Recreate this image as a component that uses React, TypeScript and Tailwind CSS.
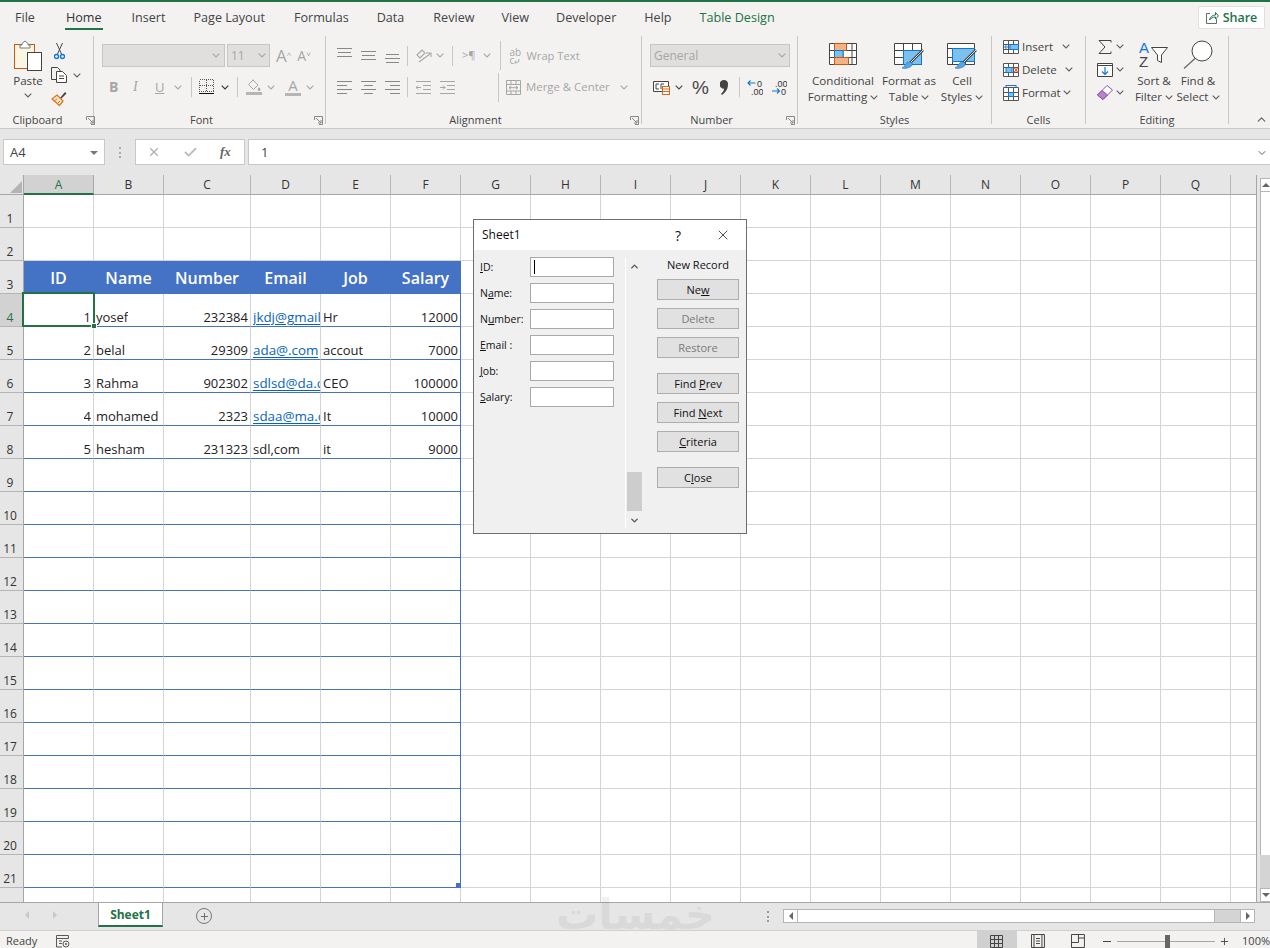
import { ChevronDown, ChevronUp, Check, X, Plus } from 'lucide-react';
import type { ReactNode } from 'react';

const UI = { fontFamily: '"Open Sans", sans-serif' };

const COLS = ['A', 'B', 'C', 'D', 'E', 'F', 'G', 'H', 'I', 'J', 'K', 'L', 'M', 'N', 'O', 'P', 'Q', ''];
const HEAD = ['ID', 'Name', 'Number', 'Email', 'Job', 'Salary'];
const DATA: Record<number, string[]> = {
  4: ['1', 'yosef', '232384', 'jkdj@gmail.com', 'Hr', '12000'],
  5: ['2', 'belal', '29309', 'ada@.com', 'accout', '7000'],
  6: ['3', 'Rahma', '902302', 'sdlsd@da.com', 'CEO', '100000'],
  7: ['4', 'mohamed', '2323', 'sdaa@ma.com', 'It', '10000'],
  8: ['5', 'hesham', '231323', 'sdl,com', 'it', '9000'],
};
const TABS = [
  ['File', 'ml-[15px]'],
  ['Home', 'ml-[31px]'],
  ['Insert', 'ml-[30px]'],
  ['Page Layout', 'ml-[28px]'],
  ['Formulas', 'ml-[29px]'],
  ['Data', 'ml-[28px]'],
  ['Review', 'ml-[29px]'],
  ['View', 'ml-[27px]'],
  ['Developer', 'ml-[27px]'],
  ['Help', 'ml-[28px]'],
  ['Table Design', 'ml-[28px]'],
];

function Chev({ className = 'text-[#605e5c]' }: { className?: string }) {
  return (
    <svg width="8" height="5" viewBox="0 0 8 5" className={className + ' shrink-0'}>
      <path d="M.7.7 4 4l3.3-3.3" fill="none" stroke="currentColor" strokeWidth="1.1" />
    </svg>
  );
}

function Launcher({ className }: { className: string }) {
  return (
    <svg width="9" height="9" viewBox="0 0 9 9" className={'absolute top-[4px] ' + className}>
      <path d="M.5 4V.5H8.5V8.5H5M2 2l5 5M7 4v3H4" fill="none" stroke="#8a8886" strokeWidth="1" />
    </svg>
  );
}

function PasteIcon() {
  return (
    <svg width="30" height="31" viewBox="0 0 30 31">
      <rect x="1.5" y="4.5" width="20" height="24" fill="#fbf5e3" stroke="#c55a11" />
      <path d="M9 5V3.5L12 1l3 2.5V5h2v3H7V5z" fill="#fff" stroke="#7a7a7a" />
      <rect x="14.5" y="12.5" width="14" height="18" fill="#fff" stroke="#444" />
    </svg>
  );
}
function CutIcon() {
  return (
    <svg width="11" height="17" viewBox="0 0 11 17">
      <path d="M2.5 0l5 11M8.500 0l-5 11" stroke="#444" fill="none" />
      <circle cx="2.500" cy="13.500" r="2" fill="none" stroke="#0f78d4" strokeWidth="1.4" />
      <circle cx="8.500" cy="13.500" r="2" fill="none" stroke="#0f78d4" strokeWidth="1.4" />
    </svg>
  );
}
function CopyIcon() {
  return (
    <svg width="17" height="16" viewBox="0 0 17 16">
      <path d="M5 12.500H.5V.5h6L9 3v1" fill="none" stroke="#444" />
      <path d="M5.500 4.500h6l4 4v7h-10zM8 9h5M8 11.500h5" fill="#fff" stroke="#444" />
    </svg>
  );
}
function BrushIcon() {
  return (
    <svg width="16" height="16" viewBox="0 0 16 16">
      <path d="M9 7l5-6 1.500 1.500L10 8z" fill="#444" />
      <path d="M6 4l6 6-3.500 4.500L1 8z" fill="#fbe3c8" stroke="#d87a22" strokeWidth="1.3" />
      <path d="M3 10l3-2M6 13l3-3" stroke="#d87a22" />
    </svg>
  );
}
function BorderIcon() {
  return (
    <svg width="16" height="16" viewBox="0 0 16 16" shapeRendering="crispEdges">
      <path d="M.5.5h14v12H.5zM7.500.5v12M.5 6.500h14" fill="none" stroke="#555" strokeDasharray="1 1" />
      <path d="M0 14.500h15" stroke="#111" />
    </svg>
  );
}
function FillIcon() {
  return (
    <svg width="16" height="16" viewBox="0 0 16 16">
      <path d="M7 1l5 5-4.500 4.500-5-5zM7 1V.5" fill="none" stroke="#a6a6a6" />
      <path d="M13 8c1 1.400 1.500 2 1.500 2.600a1.300 1.300 0 0 1-2.800 0c0-.6.5-1.200 1.300-2.600z" fill="#a6a6a6" />
      <rect y="13" width="16" height="3" fill="#b5b5b5" />
    </svg>
  );
}
function FontColorIcon() {
  return (
    <div className="flex flex-col items-center w-[16px]">
      <span className="text-[15px] leading-[13px] text-[#a6a6a6]">A</span>
      <div className="w-[16px] h-[3px] bg-[#b5b5b5] mt-[1px]" />
    </div>
  );
}
function AlignLines({ d }: { d: string }) {
  return (
    <svg width="15" height="15" viewBox="0 0 15 15">
      <path d={d} stroke="#8a8886" fill="none" />
    </svg>
  );
}
function OrientIcon() {
  return (
    <svg width="17" height="14" viewBox="0 0 17 14">
      <path d="M1 6l5-5 3 3-5 5zM3 13l11-8M10 4h5v4" fill="none" stroke="#a6a6a6" strokeWidth="1.1" />
    </svg>
  );
}
function WrapIcon() {
  return (
    <div className="w-[15px] h-[15px] flex flex-col text-[10px] leading-[8px] text-[#a6a6a6]">
      <span>ab</span>
      <span>c⤶</span>
    </div>
  );
}
function MergeIcon() {
  return (
    <svg width="15" height="15" viewBox="0 0 15 15">
      <path d="M.5.5h14v14H.5zM.5 4.500h14M.5 11h14M5 .5v4M10 .5v4M5 11v3.500M10 11v3.500M3 7.700h9M3 7.700l2-1.600M3 7.700l2 1.600M12 7.700l-2-1.600M12 7.700l-2 1.600" fill="none" stroke="#a6a6a6" />
    </svg>
  );
}
function IndentIcon({ out }: { out?: boolean }) {
  return (
    <svg width="15" height="13" viewBox="0 0 15 13">
      <path d="M0 .5h15M7 4.500h8M7 8.500h8M0 12.500h15" stroke="#a6a6a6" />
      <path d={out ? 'M5 6.500H0M2 4.500l-2 2 2 2' : 'M0 6.500h5M3 4.500l2 2-2 2'} stroke="#a6a6a6" fill="none" />
    </svg>
  );
}
function AccountingIcon() {
  return (
    <svg width="17" height="15" viewBox="0 0 17 15">
      <path d="M.5 1.500h15v10H.5z" fill="#fff" stroke="#444" />
      <path d="M3 4h3M3 4v5h3M8 4h3M8 4v5" fill="none" stroke="#444" />
      <rect x="9.500" y="6.500" width="7" height="8" fill="#fff" stroke="#d46a1a" />
      <path d="M9.500 9h7M9.500 11.500h7" stroke="#d46a1a" />
    </svg>
  );
}
function CommaIcon() {
  return (
    <svg width="8" height="15" viewBox="0 0 8 15">
      <path d="M4 0a4 4 0 0 1 4 4.500c0 4.500-2.500 8-6 10.500l-1-1c2-1.800 3-3.500 3-5.200A4 4 0 0 1 4 0z" fill="#444" />
    </svg>
  );
}
function DecimalIcon({ inc }: { inc?: boolean }) {
  return (
    <svg width="16" height="16" viewBox="0 0 16 16">
      <path
        d={inc ? 'M8.500 4H1M3.500 1.500 1 4l2.500 2.500' : 'M1 12h7.500M6 9.500 8.500 12 6 14.500'}
        fill="none"
        stroke="#0f78d4"
        strokeWidth="1.1"
      />
      <text x={inc ? 10 : 4} y="7.500" fontSize="9" fill="#333" fontFamily="Liberation Sans">
        {inc ? '0' : '.00'}
      </text>
      <text x={inc ? 4 : 10} y="15.500" fontSize="9" fill="#333" fontFamily="Liberation Sans">
        {inc ? '.00' : '0'}
      </text>
    </svg>
  );
}
function CondIcon() {
  return (
    <svg width="28" height="23" viewBox="0 0 28 23">
      <path d="M.5.5h27v21H.5zM.5 7.500h27M.5 14.500h27M5.500.5v21M14 .5v21M23 .5v21" fill="#fff" stroke="#444" />
      <rect x="5.500" y=".5" width="12" height="7" fill="#f4b183" stroke="#c55a11" />
      <rect x="5.500" y="7.500" width="8.500" height="7" fill="#7cc0ee" stroke="#0f78d4" />
      <rect x="5.500" y="14.500" width="14" height="7" fill="#f4b183" stroke="#c55a11" />
    </svg>
  );
}
function TableBrushIcon() {
  return (
    <svg width="31" height="28" viewBox="0 0 31 28">
      <path d="M.5.5h27v21H.5zM.5 7.500h27M.5 14.500h27M9.500.5v21M18.500.5v21" fill="#fff" stroke="#444" />
      <rect x="9.500" y="7.500" width="18" height="14" fill="#7cc0ee" stroke="#0f78d4" />
      <path d="M29 7L16 20" stroke="#444" strokeWidth="2.500" />
      <path d="M29.500 6.500l-13 13" stroke="#fff" strokeWidth=".8" />
      <path d="M16 19c3 0 3 4 0 5-2 1-5 2-8 1 3-1 3-6 8-6z" fill="#5ba4dc" stroke="#0f78d4" strokeWidth=".6" />
    </svg>
  );
}
function CellStyleIcon() {
  return (
    <svg width="31" height="28" viewBox="0 0 31 28">
      <path d="M.5.5h27v21H.5zM.5 5.500h27M.5 14.500h27M5.500 14.500v7M18.500 14.500v7" fill="#fff" stroke="#444" />
      <rect x="5.500" y="5.500" width="22" height="13" fill="#7cc0ee" stroke="#0f78d4" />
      <path d="M29 7L16 20" stroke="#444" strokeWidth="2.500" />
      <path d="M29.500 6.500l-13 13" stroke="#fff" strokeWidth=".8" />
      <path d="M16 19c3 0 3 4 0 5-2 1-5 2-8 1 3-1 3-6 8-6z" fill="#5ba4dc" stroke="#0f78d4" strokeWidth=".6" />
    </svg>
  );
}
function CellInsertIcon() {
  return (
    <svg width="16" height="14" viewBox="0 0 16 14">
      <path d="M.5.5h15v13H.5zM.5 4.500h15M.5 9.500h15M5.500.5v13M10.500.5v13" fill="#fff" stroke="#555" />
      <rect x="7" y="4.500" width="8.500" height="5" fill="#7cc0ee" stroke="#0f78d4" />
      <path d="M7 7H2M4 4.500L1.500 7 4 9.500" fill="none" stroke="#0f78d4" />
    </svg>
  );
}
function CellDeleteIcon() {
  return (
    <svg width="16" height="14" viewBox="0 0 16 14">
      <path d="M.5.5h15v13H.5zM.5 4.500h15M.5 9.500h15M5.500.5v13M10.500.5v13" fill="#fff" stroke="#555" />
      <rect x="3" y="4.500" width="6" height="5" fill="#7cc0ee" stroke="#0f78d4" />
      <path d="M11 4.500l4 5M15 4.500l-4 5" stroke="#e3562b" strokeWidth="1.100" />
    </svg>
  );
}
function CellFormatIcon() {
  return (
    <svg width="16" height="16" viewBox="0 0 16 16">
      <path d="M.5 2.500h15v13H.5zM.5 7.500h15M.5 11.500h15M5.500 2.500v13M10.500 2.500v13" fill="#fff" stroke="#555" />
      <rect x="5.500" y="7.500" width="5" height="4" fill="#7cc0ee" stroke="#0f78d4" />
      <path d="M3 .5h10M3 0v2M13 0v2" stroke="#0f78d4" fill="none" />
    </svg>
  );
}
function SumIcon() {
  return (
    <svg width="14" height="14" viewBox="0 0 14 14">
      <path d="M13 2.500V.5H1l6 6.500-6 6.500h12v-2" fill="none" stroke="#444" />
    </svg>
  );
}
function FillDownIcon() {
  return (
    <svg width="16" height="14" viewBox="0 0 16 14">
      <path d="M.5.5h15v13H.5zM.5 2.500h15" fill="#fff" stroke="#444" />
      <path d="M8 4v7M5 8.500L8 11.500 11 8.500" fill="none" stroke="#0f78d4" strokeWidth="1.200" />
    </svg>
  );
}
function EraserIcon() {
  return (
    <svg width="16" height="15" viewBox="0 0 16 15">
      <path d="M10 .5L15.500 5 6 14.500 .5 10z" fill="#fff" stroke="#8a4fa8" />
      <path d="M5 5.500L10.500 10 6 14.500 .5 10z" fill="#b685c9" stroke="#8a4fa8" />
    </svg>
  );
}
function SortIcon() {
  return (
    <svg width="30" height="28" viewBox="0 0 30 28">
      <text x="0" y="13" fontSize="15" fill="#0f78d4" fontFamily="Liberation Sans">A</text>
      <text x="0" y="27" fontSize="15" fill="#444" fontFamily="Liberation Sans">Z</text>
      <path d="M12.500 7.500h16l-6 7.500v7.500l-4-2V15z" fill="#fff" stroke="#444" />
    </svg>
  );
}
function FindIcon() {
  return (
    <svg width="30" height="29" viewBox="0 0 30 29">
      <circle cx="19" cy="11" r="10" fill="#fff" stroke="#444" />
      <path d="M12 18.500L1 28.500" stroke="#666" strokeWidth="1.200" />
    </svg>
  );
}
function ShareIcon() {
  return (
    <svg width="13" height="13" viewBox="0 0 13 13">
      <path d="M4 2.500H.5v10h10V8" fill="none" stroke="#6b6b6b" />
      <path d="M3.500 9c.5-3 3-5 6-5V1.500l3 3.500-3 3V6c-2.500 0-4.500 1-6 3z" fill="none" stroke="#217346" />
    </svg>
  );
}

function BigButton({ icon, a, b, className, iconTop }: { icon: ReactNode; a: string; b: string; className: string; iconTop: string }) {
  return (
    <div className={'flex flex-col items-center ' + className}>
      <div className={'h-[37px] flex items-start justify-center ' + iconTop}>{icon}</div>
      <span className="text-[11.6px] leading-[16px] whitespace-nowrap text-[#444]">{a}</span>
      <span className="text-[11.6px] leading-[16px] whitespace-nowrap text-[#444] flex items-center gap-[3px]">
        {b}
        <Chev />
      </span>
    </div>
  );
}

function Group({ label, launcher, className, labelClass = '', children }: { label: string; launcher?: string; className: string; labelClass?: string; children: ReactNode }) {
  return (
    <div className={'relative flex flex-col h-[96px] pt-[4px] shrink-0 ' + className}>
      <div className="flex-1 min-h-0">{children}</div>
      <div className={'relative h-[16px] text-[11px] leading-[16px] text-center text-[#444] ' + labelClass}>
        {label}
        {launcher && <Launcher className={launcher} />}
      </div>
    </div>
  );
}

function Sep() {
  return <div className="w-px h-[88px] mt-[4px] bg-[#c8c6c4] shrink-0" />;
}
function MiniSep({ className = 'h-[20px]' }: { className?: string }) {
  return <div className={'w-px bg-[#c8c6c4] shrink-0 ' + className} />;
}

function Ribbon() {
  return (
    <div className="flex h-[97px] bg-[#f3f2f1] border-b border-[#c9c9c9]">
      {/* Clipboard */}
      <Group label="Clipboard" launcher="left-[86px]" className="w-[93px]" labelClass="pr-[18px]">
        <div className="flex">
          <div className="ml-[13px] w-[30px] flex flex-col items-center">
            <div className="mt-[4px]"><PasteIcon /></div>
            <span className="text-[11.6px] leading-[16px] mt-[2px] text-[#444]">Paste</span>
            <Chev className="text-[#605e5c] mt-[4px]" />
          </div>
          <div className="ml-[8px] flex flex-col">
            <div className="h-[24px] mt-[3px] pl-[3px] flex items-center"><CutIcon /></div>
            <div className="h-[24px] flex items-center gap-[5px]"><CopyIcon /><Chev /></div>
            <div className="h-[24px] flex items-center"><BrushIcon /></div>
          </div>
        </div>
      </Group>
      <Sep />

      {/* Font */}
      <Group label="Font" launcher="left-[220px]" className="w-[231px]" labelClass="pr-[16px]">
        <div className="flex items-center ml-[8px] mt-[8px] h-[23px]">
          <div className="w-[123px] h-[23px] bg-[#e1dfdd] border border-[#c8c6c4] flex items-center justify-end pr-[4px]"><Chev className="text-[#a6a6a6]" /></div>
          <div className="ml-[2px] w-[43px] h-[23px] bg-[#e1dfdd] border border-[#c8c6c4] flex items-center justify-between px-[3px] text-[12px] text-[#a6a6a6]">11<Chev className="text-[#a6a6a6]" /></div>
          <span className="ml-[6px] text-[17px] text-[#a6a6a6]">A<sup className="text-[8px]">^</sup></span>
          <span className="ml-[6px] text-[14px] text-[#a6a6a6]">A<sup className="text-[8px]">˅</sup></span>
        </div>
        <div className="flex items-center ml-[15px] mt-[10px] h-[20px] text-[#a6a6a6]">
          <span className="w-[9px] text-[14px] font-bold leading-none">B</span>
          <span className="ml-[15px] w-[8px] text-[14px] italic leading-none" style={{ fontFamily: 'Liberation Serif, serif' }}>I</span>
          <span className="ml-[14px] w-[10px] text-[13px] underline leading-none">U</span>
          <span className="ml-[9px]"><Chev className="text-[#a6a6a6]" /></span>
          <MiniSep className="ml-[9px] h-[20px]" />
          <span className="ml-[7px]"><BorderIcon /></span>
          <span className="ml-[6px]"><Chev className="text-[#333]" /></span>
          <MiniSep className="ml-[8px] h-[20px]" />
          <span className="ml-[8px]"><FillIcon /></span>
          <span className="ml-[5px]"><Chev className="text-[#a6a6a6]" /></span>
          <span className="ml-[10px]"><FontColorIcon /></span>
          <span className="ml-[5px]"><Chev className="text-[#a6a6a6]" /></span>
        </div>
      </Group>
      <Sep />

      {/* Alignment */}
      <Group label="Alignment" launcher="left-[304px]" className="w-[315px]" labelClass="pr-[16px]">
        <div className="flex items-center ml-[11px] mt-[8px] h-[23px]">
          <AlignLines d="M0 .5h15M1 4.500h13M0 8.500h15" />
          <span className="ml-[9px]"><AlignLines d="M0 3.500h15M1 7.500h13M0 11.500h15" /></span>
          <span className="ml-[9px]"><AlignLines d="M1 6.500h13M0 10.500h15M1 14.500h13" /></span>
          <MiniSep className="ml-[7px] h-[20px]" />
          <span className="ml-[8px]"><OrientIcon /></span>
          <span className="ml-[3px]"><Chev className="text-[#a6a6a6]" /></span>
          <MiniSep className="ml-[8px] h-[20px]" />
          <span className="ml-[9px] text-[11px] text-[#a6a6a6]">{'>¶'}</span>
          <span className="ml-[7px]"><Chev className="text-[#a6a6a6]" /></span>
          <MiniSep className="ml-[9px] h-[29px]" />
          <span className="ml-[9px]"><WrapIcon /></span>
          <span className="ml-[2px] pt-[1px] text-[11.2px] text-[#a6a6a6]">Wrap Text</span>
        </div>
        <div className="flex items-center ml-[11px] mt-[9px] h-[22px]">
          <AlignLines d="M0 1.500h15M0 5.500h10M0 9.500h15M0 13.500h10" />
          <span className="ml-[9px]"><AlignLines d="M0 1.500h15M3 5.500h9M0 9.500h15M3 13.500h9" /></span>
          <span className="ml-[9px]"><AlignLines d="M0 1.500h15M5 5.500h10M0 9.500h15M5 13.500h10" /></span>
          <MiniSep className="ml-[7px] h-[20px]" />
          <span className="ml-[8px]"><IndentIcon out /></span>
          <span className="ml-[9px]"><IndentIcon /></span>
          <MiniSep className="ml-[43px] h-[29px]" />
          <span className="ml-[7px]"><MergeIcon /></span>
          <span className="ml-[5px] text-[11.4px] text-[#a6a6a6] whitespace-nowrap">Merge &amp; Center</span>
          <span className="ml-[10px]"><Chev className="text-[#a6a6a6]" /></span>
        </div>
      </Group>
      <Sep />

      {/* Number */}
      <Group label="Number" launcher="left-[144px]" className="w-[155px]" labelClass="pr-[16px]">
        <div className="ml-[8px] mt-[8px] w-[140px] h-[23px] bg-[#e1dfdd] border border-[#c8c6c4] flex items-center justify-between px-[3px] text-[12px] text-[#a6a6a6]">
          General<Chev className="text-[#a6a6a6]" />
        </div>
        <div className="flex items-center ml-[11px] mt-[9px] h-[22px]">
          <AccountingIcon />
          <span className="ml-[5px]"><Chev className="text-[#444]" /></span>
          <span className="ml-[9px] w-[17px] text-[19px] leading-none text-[#444]" style={{ fontFamily: 'Liberation Sans, sans-serif' }}>%</span>
          <span className="ml-[11px]"><CommaIcon /></span>
          <MiniSep className="ml-[11px] h-[20px]" />
          <span className="ml-[7px]"><DecimalIcon inc /></span>
          <span className="ml-[8px]"><DecimalIcon /></span>
        </div>
      </Group>
      <Sep />

      {/* Styles */}
      <Group label="Styles" className="w-[193px]">
        <div className="flex">
          <BigButton icon={<CondIcon />} a="Conditional" b="Formatting" iconTop="pt-[7px]" className="ml-[10px] w-[70px]" />
          <BigButton icon={<TableBrushIcon />} a="Format as" b="Table" iconTop="pt-[7px]" className="ml-[2px] w-[58px]" />
          <BigButton icon={<CellStyleIcon />} a="Cell" b="Styles" iconTop="pt-[7px]" className="ml-[2px] w-[44px]" />
        </div>
      </Group>
      <Sep />

      {/* Cells */}
      <Group label="Cells" className="w-[93px]">
        <div className="flex flex-col ml-[11px] -mt-[1px] text-[11.5px] text-[#444]">
          <div className="h-[23px] flex items-center"><CellInsertIcon /><span className="ml-[3px] w-[40px]">Insert</span><Chev /></div>
          <div className="h-[23px] flex items-center"><CellDeleteIcon /><span className="ml-[3px] w-[43px]">Delete</span><Chev /></div>
          <div className="h-[23px] flex items-center"><CellFormatIcon /><span className="ml-[3px] w-[41px]">Format</span><Chev /></div>
        </div>
      </Group>
      <Sep />

      {/* Editing */}
      <Group label="Editing" className="w-[142px]">
        <div className="flex">
          <div className="flex flex-col ml-[11px] -mt-[1px] w-[32px]">
            <div className="h-[23px] flex items-center gap-[4px] pl-[1px]"><SumIcon /><Chev /></div>
            <div className="h-[23px] flex items-center gap-[3px]"><FillDownIcon /><Chev /></div>
            <div className="h-[23px] flex items-center gap-[3px]"><EraserIcon /><Chev /></div>
          </div>
          <BigButton icon={<SortIcon />} a="Sort &" b="Filter" iconTop="pt-[4px]" className="ml-[1px] w-[48px]" />
          <BigButton icon={<FindIcon />} a="Find &" b="Select" iconTop="pt-[4px]" className="ml-[-3px] w-[46px]" />
        </div>
      </Group>
      <Sep />

      <div className="flex-1 flex justify-end items-end pr-[2px] pb-[2px]">
        <ChevronUp size={13} className="text-[#605e5c]" />
      </div>
    </div>
  );
}

function FormulaBar() {
  return (
    <div className="flex items-center h-[46px] bg-[#e6e6e6] text-[13px] text-[#444]">
      <div className="ml-[3px] w-[102px] h-[26px] pt-[1px] bg-white border border-[#c8c8c8] flex items-center justify-between pl-[6px] pr-[6px]">
        A4
        <div className="w-0 h-0 border-x-[4px] border-x-transparent border-t-[4px] border-t-[#777]" />
      </div>
      <div className="ml-[14px] w-[2px] h-[11px] border-l-2 border-dotted border-[#aaa]" />
      <div className="ml-[14px] w-[110px] h-[26px] bg-white border border-[#c8c8c8] flex items-center text-[#b0b0b0]">
        <X size={14} className="ml-[11px]" />
        <Check size={15} strokeWidth={3} className="ml-[22px] text-[#bdbdbd]" />
        <span className="ml-[22px] text-[13px] italic font-bold text-[#666]" style={{ fontFamily: 'Liberation Serif, serif' }}>fx</span>
      </div>
      <div className="ml-[3px] flex-1 h-[26px] pt-[1px] bg-white border-y border-l border-[#c8c8c8] flex items-center justify-between pl-[12px] pr-[2px]">
        1
        <ChevronDown size={12} className="text-[#605e5c]" />
      </div>
    </div>
  );
}

function Cell({ r, c }: { r: number; c: number }) {
  if (r === 3 && c < 6) {
    return (
      <div className="-mt-[1px] bg-[#4472c4] text-white font-semibold text-[16px] leading-[20px] flex items-end justify-center pb-[6px] border-r border-[#4472c4]">
        {HEAD[c]}
      </div>
    );
  }
  const table = r >= 4 && r <= 21 && c < 6;
  const text = DATA[r]?.[c];
  const isNum = text !== undefined && /^\d+$/.test(text);
  const isLink = c === 3 && text !== undefined && text.includes('@');
  return (
    <div
      className={
        'relative border-b border-r pb-[1px] text-[13px] leading-[16px] flex items-end ' +
        (isLink ? 'pl-[2px] ' : 'px-[2px] ') +
        (table ? 'border-b-[#4472c4] ' : 'border-b-[#d4d4d4] ') +
        (table && c === 5 ? 'border-r-[#4472c4] ' : 'border-r-[#d4d4d4] ') +
        (isNum ? 'justify-end text-right' : 'justify-start')
      }
    >
      {text !== undefined && (
        <span className={'block overflow-hidden whitespace-nowrap ' + (isLink ? 'text-[13.4px] text-[#0563c1] underline underline-offset-[2px]' : 'text-[#222]')}>{text}</span>
      )}
      {r === 4 && c === 0 && (
        <div className="absolute z-10 -left-[2px] -top-[2px] w-[73px] h-[35px] border-2 border-[#217346]">
          <div className="absolute -right-[4px] -bottom-[4px] w-[6px] h-[6px] bg-[#217346] border border-white" />
        </div>
      )}
      {r === 21 && c === 5 && <div className="absolute right-0 bottom-0 w-[4px] h-[4px] bg-[#4472c4]" />}
    </div>
  );
}

function Sheet() {
  const rows = Array.from({ length: 21 }, (_, i) => i + 1);
  return (
    <div className="w-[1257px] grid grid-cols-[24px_70px_70px_87px_70px_70px_70px_70px_70px_70px_70px_70px_70px_70px_70px_70px_70px_70px_26px] grid-rows-[20px_repeat(21,33px)_14px] bg-white text-[#222] overflow-hidden border-b border-r border-[#a6a6a6]">
      <div className="bg-[#e6e6e6] border-b border-r border-[#a6a6a6] flex items-end justify-end pr-[1px] pb-[1px]">
        <div className="w-0 h-0 border-l-[12px] border-l-transparent border-b-[12px] border-b-[#b4b4b4]" />
      </div>
      {COLS.map((name, i) => (
        <div
          key={i}
          className={
            'flex items-center justify-center pt-[1px] text-[12px] border-r ' +
            (i === 0 ? 'bg-[#d2d2d2] text-[#217346] border-b-2 border-b-[#217346] border-r-[#a6a6a6]' : 'bg-[#e6e6e6] text-[#333] border-b border-b-[#a6a6a6] border-r-[#b5b5b5]')
          }
        >
          {name}
        </div>
      ))}
      {rows.map((r) => (
        <div key={r} className="contents">
          <div
            className={
              'flex items-end justify-center pr-[3px] text-[12px] leading-[16px] border-r border-b border-r-[#a6a6a6] border-b-[#b5b5b5] ' +
              (r === 4 ? 'bg-[#d2d2d2] text-[#217346]' : 'bg-[#e6e6e6] text-[#333]')
            }
          >
            {r}
          </div>
          {COLS.map((_, c) => (
            <Cell key={c} r={r} c={c} />
          ))}
        </div>
      ))}
      <div className="bg-[#e6e6e6] border-r border-[#a6a6a6]" />
      {COLS.map((_, i) => (
        <div key={i} className="border-r border-[#d4d4d4]" />
      ))}
    </div>
  );
}

function Under({ a, u, b }: { a?: string; u: string; b?: string }) {
  return (
    <span>
      {a}
      <span className="underline">{u}</span>
      {b}
    </span>
  );
}

function FormButton({ children, disabled, className = '' }: { children: ReactNode; disabled?: boolean; className?: string }) {
  return (
    <div
      className={
        'w-[82px] h-[21px] pt-[1px] bg-[#e1e1e1] border border-[#adadad] flex items-center justify-center text-[11px] ' +
        (disabled ? 'text-[#7a7a7a] ' : 'text-[#111] ') +
        className
      }
    >
      {children}
    </div>
  );
}

function DataForm() {
  const fields = [
    <Under u="I" b="D:" />,
    <Under a="N" u="a" b="me:" />,
    <Under a="N" u="u" b="mber:" />,
    <Under u="E" b="mail :" />,
    <Under u="J" b="ob:" />,
    <Under u="S" b="alary:" />,
  ];
  return (
    <div className="absolute left-[473px] top-[44px] w-[274px] h-[315px] bg-[#f0f0f0] border border-[#6e6e6e] flex flex-col text-[#111]">
      <div className="h-[30px] bg-white flex items-center pl-[8px] pr-[15px] text-[12px] shrink-0">
        <span>Sheet1</span>
        <span className="ml-auto text-[14px]">?</span>
        <X size={16} strokeWidth={1.2} className="ml-[34px] text-[#222]" />
      </div>
      <div className="flex flex-1 pl-[6px] pt-[7px]">
        <div className="w-[134px] flex flex-col gap-[6px]">
          {fields.map((f, i) => (
            <div key={i} className="flex items-center h-[20px] text-[10.5px] font-medium">
              <span className="w-[50px] pt-[2px] whitespace-nowrap">{f}</span>
              <div className="w-[84px] h-[20px] bg-white border border-[#a9a9a9] flex items-center pl-[3px]">
                {i === 0 && <div className="w-px h-[14px] bg-black" />}
              </div>
            </div>
          ))}
        </div>
        <div className="ml-[11px] w-[17px] h-[270px] mt-[1px] border-l border-white flex flex-col items-center">
          <ChevronUp size={11} strokeWidth={3} className="mt-[3px] text-[#555]" />
          <div className="mt-auto w-[15px] h-[39px] bg-[#cdcdcd]" />
          <ChevronDown size={11} strokeWidth={3} className="mt-[4px] mb-[2px] text-[#555]" />
        </div>
        <div className="ml-[15px] w-[82px] flex flex-col">
          <div className="h-[16px] mb-[6px] flex items-center justify-center text-[11px] font-medium">New Record</div>
          <FormButton><Under a="Ne" u="w" /></FormButton>
          <FormButton disabled className="mt-[8px]">Delete</FormButton>
          <FormButton disabled className="mt-[8px]">Restore</FormButton>
          <FormButton className="mt-[15px]"><Under a="Find " u="P" b="rev" /></FormButton>
          <FormButton className="mt-[8px]"><Under a="Find " u="N" b="ext" /></FormButton>
          <FormButton className="mt-[8px]"><Under u="C" b="riteria" /></FormButton>
          <FormButton className="mt-[15px]"><Under a="C" u="l" b="ose" /></FormButton>
        </div>
      </div>
    </div>
  );
}

function VScroll() {
  return (
    <div className="w-[13px] pl-[3px] bg-[#e6e6e6] flex flex-col border-b border-[#a6a6a6]">
      <div className="h-[3px]" />
      <div className="h-[14px] bg-white border-y border-l border-[#b5b5b5] flex items-center justify-center">
        <div className="w-0 h-0 border-x-[4px] border-x-transparent border-b-[4px] border-b-[#666]" />
      </div>
      <div className="h-[663px] bg-white border-l border-[#b5b5b5]" />
      <div className="flex-1 bg-[#d4d4d4]" />
      <div className="h-[14px] bg-white border-y border-l border-[#b5b5b5] flex items-center justify-center">
        <div className="w-0 h-0 border-x-[4px] border-x-transparent border-t-[4px] border-t-[#666]" />
      </div>
    </div>
  );
}

function TabBar() {
  return (
    <div className="relative flex items-start h-[28px] bg-[#e6e6e6] border-b border-[#d0d0d0] text-[#444] shrink-0">
      <div className="ml-[25px] mt-[8px] w-0 h-0 border-y-[4px] border-y-transparent border-r-[4px] border-r-[#c8c8c8]" />
      <div className="ml-[24px] mt-[8px] w-0 h-0 border-y-[4px] border-y-transparent border-l-[4px] border-l-[#c8c8c8]" />
      <div className="ml-[41px] w-[65px] h-[24px] pt-[1px] bg-white border-x border-[#a6a6a6] border-b-2 border-b-[#217346] flex items-center justify-center text-[12px] font-bold text-[#217346]">
        Sheet1
      </div>
      <div className="ml-[33px] mt-[5px] w-[16px] h-[16px] rounded-full border border-[#777] flex items-center justify-center">
        <Plus size={11} strokeWidth={2} className="text-[#666]" />
      </div>
      <div className="ml-[555px] mt-[8px] w-[2px] h-[11px] border-l-2 border-dotted border-[#999]" />
      <div className="ml-[14px] mt-[6px] w-[472px] h-[14px] flex border border-[#b5b5b5] bg-[#d4d4d4]">
        <div className="w-[14px] bg-white border-r border-[#b5b5b5] flex items-center justify-center">
          <div className="w-0 h-0 border-y-[4px] border-y-transparent border-r-[4px] border-r-[#666]" />
        </div>
        <div className="w-[417px] bg-white border-r border-[#b5b5b5]" />
        <div className="ml-auto w-[14px] bg-white border-l border-[#b5b5b5] flex items-center justify-center">
          <div className="w-0 h-0 border-y-[4px] border-y-transparent border-l-[4px] border-l-[#666]" />
        </div>
      </div>
    </div>
  );
}

function StatusBar() {
  return (
    <div className="flex items-center h-[17px] pt-[3px] bg-[#f3f2f1] text-[11px] text-[#444] shrink-0">
      <span className="ml-[6px] w-[31px]">Ready</span>
      <svg width="14" height="13" viewBox="0 0 14 13" className="ml-[19px]">
        <path d="M.5.500h12v3H.5zM.5 3.500V12H6M3 6h3M3 8.500h3" fill="none" stroke="#555" />
        <circle cx="10" cy="9" r="3" fill="none" stroke="#555" />
        <circle cx="10" cy="9" r="1" fill="#555" />
      </svg>
      <div className="ml-[907px] -mt-[3px] w-[40px] h-[17px] pt-[3px] bg-[#d0d0d0] flex items-center justify-center">
        <svg width="13" height="13" viewBox="0 0 13 13"><path d="M.5.500h12v12H.5zM4.500.500v12M8.500.500v12M.5 4.500h12M.5 8.500h12" fill="none" stroke="#444" /></svg>
      </div>
      <svg width="14" height="14" viewBox="0 0 14 14" className="ml-[14px]"><path d="M.5.500h13v13H.5zM3 .5v13M11 .5v13M5 4.500h4M5 7h4M5 9.500h4" fill="none" stroke="#444" /></svg>
      <svg width="14" height="14" viewBox="0 0 14 14" className="ml-[26px]"><path d="M.5.500h13v13H.5zM.5 8.500h7V.5M7.500 4h6" fill="none" stroke="#444" /></svg>
      <div className="ml-[18px] w-[8px] h-px bg-[#444]" />
      <div className="relative ml-[6px] w-[99px] h-px bg-[#a6a6a6]">
        <div className="absolute left-[48px] -top-[6px] w-[5px] h-[13px] bg-[#666]" />
      </div>
      <Plus size={11} className="ml-[4px] text-[#444]" />
      <span className="ml-[12px] whitespace-nowrap">100%</span>
    </div>
  );
}

export default function App() {
  return (
    <div className="relative w-[1270px] h-[948px] overflow-hidden bg-white flex flex-col" style={UI}>
      <div className="h-[32px] pt-[1px] bg-[#f3f2f1] border-t-2 border-[#217346] flex items-center text-[12.6px] leading-[18px] text-[#444] shrink-0">
        {TABS.map(([t, m]) => (
          <span key={t} className={'relative whitespace-nowrap ' + m + (t === 'Home' ? ' text-[#333]' : '') + (t === 'Table Design' ? ' text-[#217346]' : '')}>
            {t}
            {t === 'Home' && <span className="absolute -left-[1px] -right-[1px] top-[19px] h-[2px] bg-[#217346]" />}
          </span>
        ))}
        <div className="ml-auto mr-[5px] w-[67px] h-[23px] bg-white border border-[#e1dfdd] rounded-[2px] flex items-center justify-center gap-[4px] text-[12.5px] font-semibold text-[#217346]">
          <ShareIcon />
          Share
        </div>
      </div>
      <Ribbon />
      <FormulaBar />
      <div className="relative flex h-[728px] shrink-0">
        <Sheet />
        <VScroll />
        <DataForm />
      </div>
      <TabBar />
      <StatusBar />
      <div className="absolute left-[556px] top-[889px] text-[42px] leading-[52px] font-bold text-black opacity-5 pointer-events-none" style={{ fontFamily: '"DejaVu Sans", sans-serif' }}>
        خمسات
      </div>
    </div>
  );
}
